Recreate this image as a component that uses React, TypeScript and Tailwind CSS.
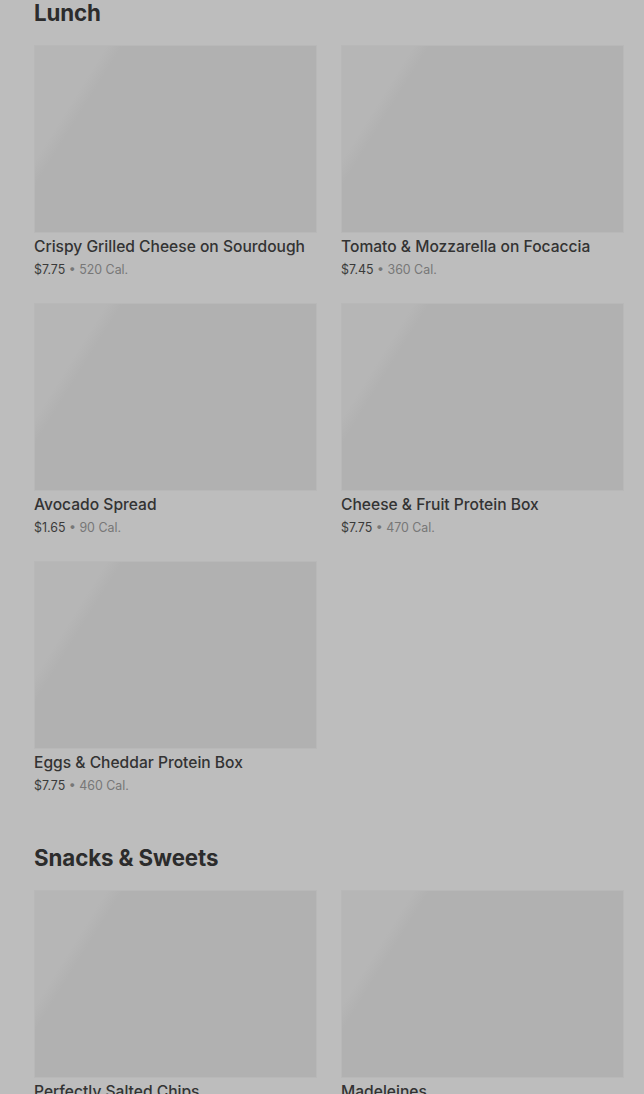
import React from "react";

type Item = { name: string; price: string; cal: string };

const sections: { title: string; items: Item[] }[] = [
  {
    title: "Lunch",
    items: [
      { name: "Crispy Grilled Cheese on Sourdough", price: "$7.75", cal: "520 Cal." },
      { name: "Tomato & Mozzarella on Focaccia", price: "$7.45", cal: "360 Cal." },
      { name: "Avocado Spread", price: "$1.65", cal: "90 Cal." },
      { name: "Cheese & Fruit Protein Box", price: "$7.75", cal: "470 Cal." },
      { name: "Eggs & Cheddar Protein Box", price: "$7.75", cal: "460 Cal." },
    ],
  },
  {
    title: "Snacks & Sweets",
    items: [
      { name: "Perfectly Salted Chips", price: "$1.95", cal: "160 Cal." },
      { name: "Madeleines", price: "$2.45", cal: "210 Cal." },
    ],
  },
];

function Card({ item }: { item: Item }) {
  return (
    <div className="flex flex-col">
      <div className="h-[188px] border border-[#b8b8b8] bg-[#b1b1b1] bg-[linear-gradient(122deg,#b6b6b6_0%,#b6b6b6_18%,#b1b1b1_22%,#b1b1b1_100%)]" />
      <div className="mt-[4px] text-[15.6px] leading-[20px] font-medium text-[#333333] whitespace-nowrap">
        {item.name}
      </div>
      <div className="mt-[4px] text-[12.4px] leading-[18px] whitespace-nowrap">
        <span className="text-[#3a3a3a]">{item.price}</span>
        <span className="text-[#777777]"> • {item.cal}</span>
      </div>
    </div>
  );
}

export default function App() {
  return (
    <div
      className="min-h-screen bg-[#bdbdbd] pl-[34px] pr-[20px] pb-10"
      style={{ fontFamily: "Inter, 'Noto Sans', sans-serif" }}
    >
      <div className="-mt-[1px] flex flex-col gap-[49px]">
        {sections.map((s) => (
          <section key={s.title} className="flex flex-col">
            <h2 className="text-[22.3px] leading-[28px] font-bold text-[#2c2c2c] tracking-[-0.1px]">
              {s.title}
            </h2>
            <div className="mt-[18px] grid grid-cols-2 gap-x-[24px] gap-y-[24px]">
              {s.items.map((it) => (
                <Card key={it.name} item={it} />
              ))}
            </div>
          </section>
        ))}
      </div>
    </div>
  );
}
